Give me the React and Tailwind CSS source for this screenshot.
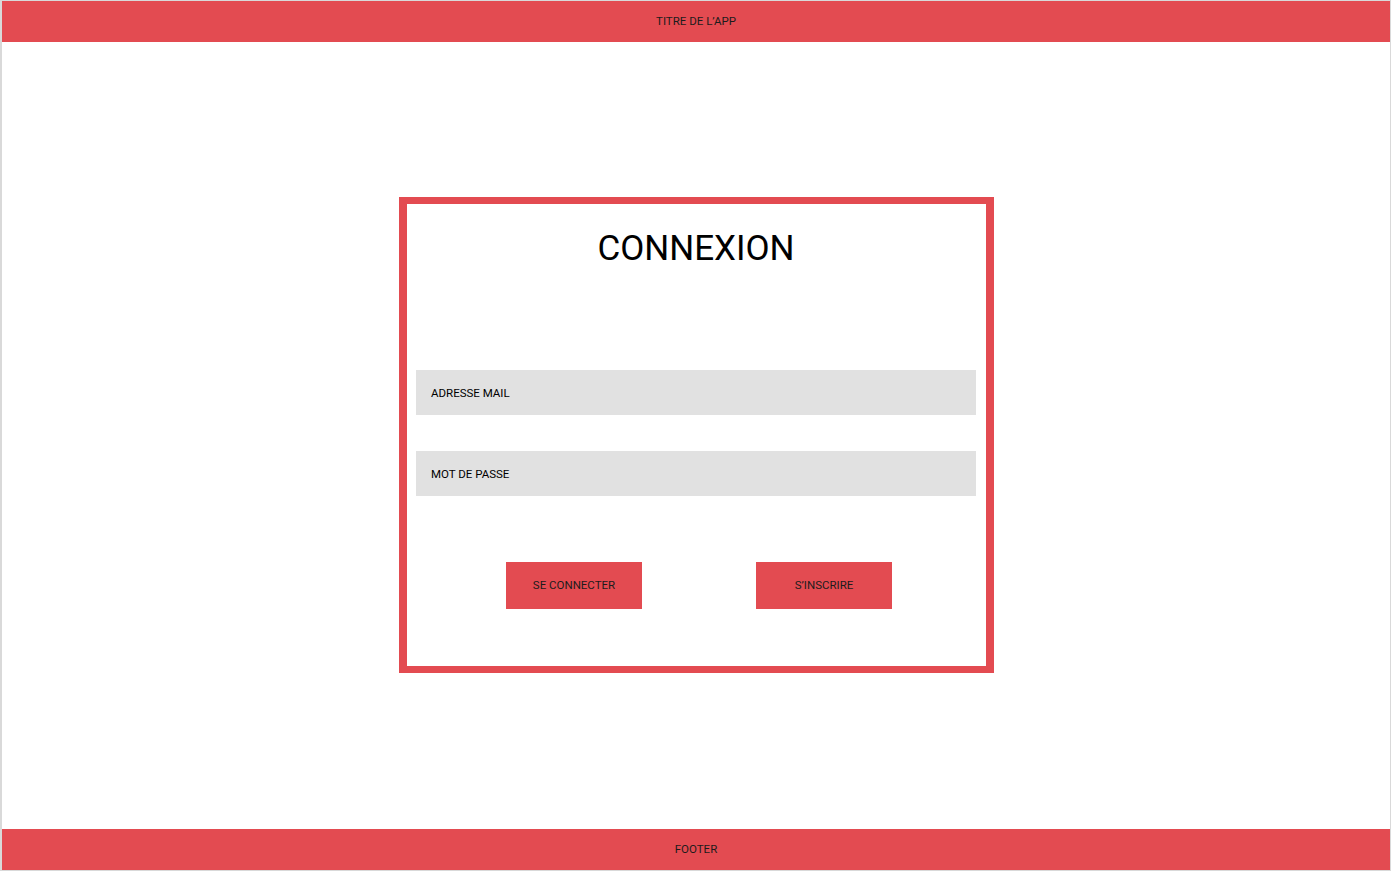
import React from "react";

const RED = "bg-[#e34b51]";

function Field({ label }) {
  return (
    <div className="h-[45px] w-[560px] bg-[#e1e1e1] flex items-center pl-[15px] pt-[3px] text-[11.5px] text-black">
      {label}
    </div>
  );
}

function Btn({ children }) {
  return (
    <button className="h-[47px] w-[136px] bg-[#e34b51] pt-[2px] text-[11.5px] text-[#1c1c1c] flex items-center justify-center">
      {children}
    </button>
  );
}

export default function App() {
  return (
    <div
      className="h-[871px] flex flex-col bg-white border-y border-r border-l-2 border-[#d9d9d9]"
      style={{ fontFamily: "Roboto, 'Liberation Sans', sans-serif" }}
    >
      {/* header */}
      <header className={`h-[41px] shrink-0 ${RED} flex items-center justify-center pt-px text-[11.5px] text-[#1c1c1c]`}>
        TITRE DE L’APP
      </header>

      <main className="flex-1 flex items-center justify-center pb-[2px]">
        <div className="w-[595px] h-[476px] border-x-8 border-y-[7px] border-[#e34b51] flex flex-col items-center">
          <h1 className="pt-[22px] text-[35px] leading-[45px] text-black">CONNEXION</h1>

          <div className="mt-[99px] flex flex-col gap-[36px]">
            <Field label="ADRESSE MAIL" />
            <Field label="MOT DE PASSE" />
          </div>

          <div className="mt-[66px] w-[560px] flex gap-[114px] pl-[90px]">
            <Btn>SE CONNECTER</Btn>
            <Btn>S’INSCRIRE</Btn>
          </div>
        </div>
      </main>

      <footer className={`h-[41px] shrink-0 ${RED} flex items-center justify-center pt-px text-[11.5px] text-[#1c1c1c]`}>
        FOOTER
      </footer>
    </div>
  );
}
